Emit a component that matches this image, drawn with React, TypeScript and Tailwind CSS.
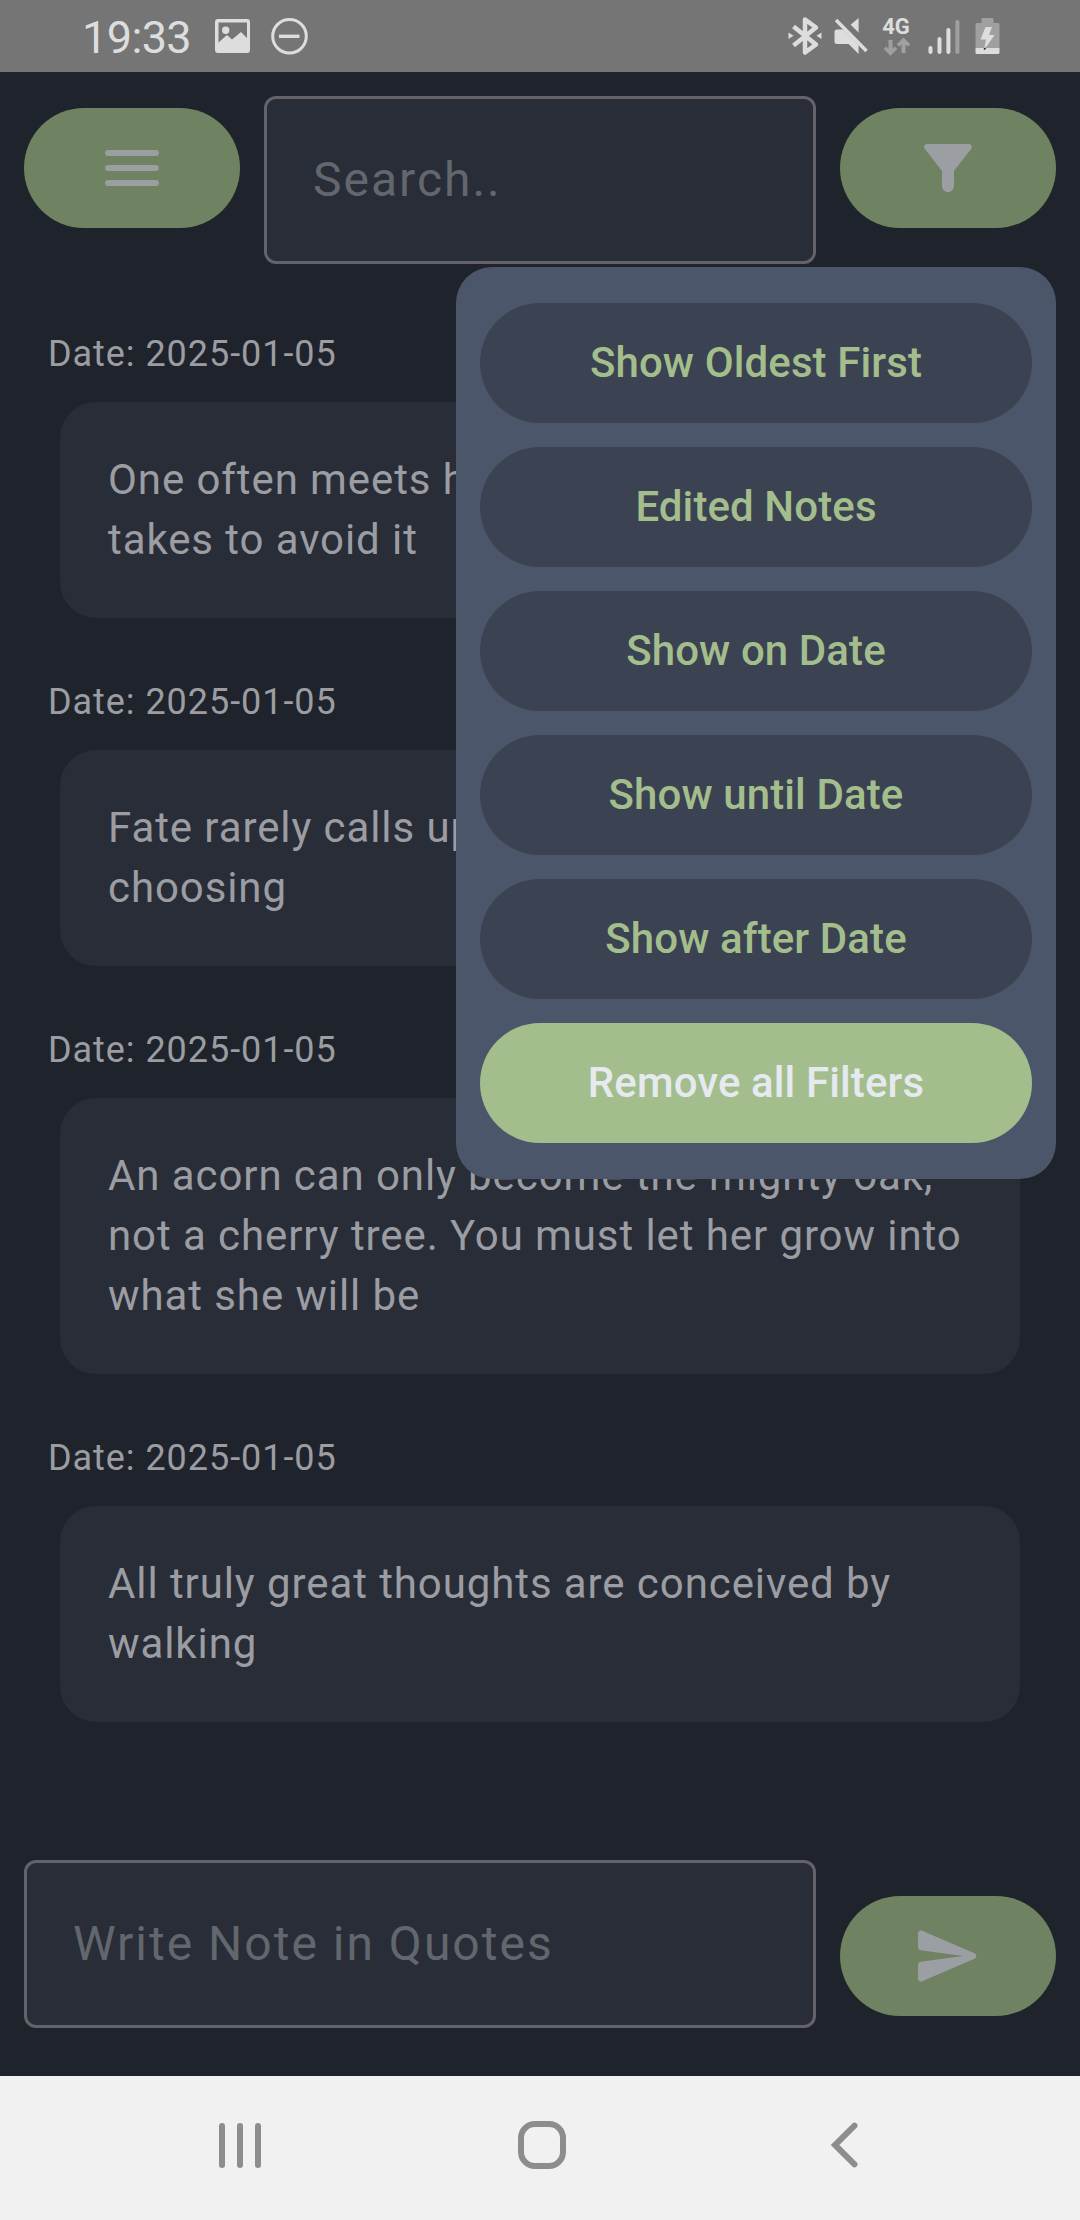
import React from "react";

const notes: { date: string; lines: string[] }[] = [
  { date: "2025-01-05", lines: ["One often meets his destiny on the road he", "takes to avoid it"] },
  { date: "2025-01-05", lines: ["Fate rarely calls upon us at a moment of our", "choosing"] },
  {
    date: "2025-01-05",
    lines: ["An acorn can only become the mighty oak,", "not a cherry tree. You must let her grow into", "what she will be"],
  },
  { date: "2025-01-05", lines: ["All truly great thoughts are conceived by", "walking"] },
];

const filters = ["Show Oldest First", "Edited Notes", "Show on Date", "Show until Date", "Show after Date"];

function StatusBar() {
  return (
    <header className="flex h-[72px] shrink-0 items-center justify-between bg-[#757575] pr-[80px] pl-[82px] text-[#dddddd]">
      <div className="flex items-center">
        <span className="w-[133px] pt-[3px] text-[45px] leading-[69px] tracking-[-0.6px] whitespace-nowrap">19:33</span>
        <svg width="36" height="36" viewBox="0 0 36 36" className="mr-[20px]">
          <path
            fill="currentColor"
            fillRule="evenodd"
            d="M3 1h29a3 3 0 0 1 3 3v28a3 3 0 0 1-3 3H3a3 3 0 0 1-3-3V4a3 3 0 0 1 3-3zM3.500 4.500v20l8.500-7.500 5 4.500L26 14l6 6V4.500zM10.700 8.500a3.700 3.700 0 1 1 0 7.400a3.700 3.700 0 0 1 0-7.400z"
          />
        </svg>
        <svg width="38" height="38" viewBox="0 0 38 38" fill="none" stroke="currentColor" strokeWidth="3">
          <circle cx="18.500" cy="19.300" r="16.800" />
          <path d="M8 19.300h20.500" strokeWidth="3.400" />
        </svg>
      </div>
      <div className="flex h-[40px] items-center">
        <svg width="34" height="40" viewBox="0 0 34 40" className="mr-[12px]">
          <path d="M5.500 10.500L28 28.500L17 36.500V3.500L28 11.500L5.500 29.500" fill="none" stroke="currentColor" strokeWidth="4.500" strokeLinejoin="round" />
          <path d="M0.500 16.500v6.600l5-3.300zM33.500 16.500v6.600l-5-3.300z" fill="currentColor" />
        </svg>
        <svg width="34" height="40" viewBox="0 0 34 40" className="mr-[14px]">
          <path d="M0.500 16q0-2.500 2.500-2.500h6l15.600 15.600V38l-10-10H3q-2.500 0-2.500-2.500zM24.600 2v14.500l-8-7.800z" fill="currentColor" />
          <path d="M2 4l30.500 31" stroke="currentColor" strokeWidth="3.500" />
        </svg>
        <div className="mr-[18px] flex h-[40px] w-[28px] flex-col items-center">
          <span className="h-[20px] text-[22px] leading-[22px] font-bold">4G</span>
          <svg width="28" height="20" viewBox="0 0 28 20" fill="none" stroke="#a0a0a0" strokeWidth="4">
            <path d="M8.500 4v13M21.500 17V5" />
            <path d="M3 11.800l5.500 5.400L14 11.800M16 9.500L21.500 4L27 9.500" strokeWidth="3.600" />
          </svg>
        </div>
        <svg width="32" height="40" viewBox="0 0 32 40" className="mr-[15px]" fill="currentColor">
          <rect x="0.500" y="30" width="4" height="8" rx="2" />
          <rect x="9.500" y="21" width="4" height="17" rx="2" />
          <rect x="18.400" y="12" width="4" height="26" rx="2" />
          <rect x="27.400" y="4" width="4" height="34" rx="2" fill="#a0a0a0" />
        </svg>
        <svg width="25" height="40" viewBox="0 0 25 40">
          <path d="M7.500 2h10q1 0 1 1v4H23q1.500 0 1.500 1.500V32H0.500V8.500Q0.500 7 2 7h4.500V3q0-1 1-1z" fill="#a0a0a0" />
          <path d="M0.500 32h24v4.500q0 1.500-1.500 1.500H2Q0.500 38 0.500 36.500z" fill="currentColor" />
          <path d="M10.500 11H17l-3 8h5.500L9 34l2-10.500H5.500z" fill="currentColor" />
          <path d="M8.800 33.500l2-1.500" stroke="#222" strokeWidth="1.400" />
        </svg>
      </div>
    </header>
  );
}

function PillButton({ children }: { children: React.ReactNode }) {
  return (
    <button className="flex h-[120px] w-[216px] shrink-0 items-center justify-center rounded-full bg-[#6f8261] text-[#9b9ea3]">
      <svg width="72" height="72" viewBox="0 0 24 24" fill="currentColor">
        {children}
      </svg>
    </button>
  );
}

function Field({ label }: { label: string }) {
  return (
    <div className="flex h-[168px] flex-1 items-center rounded-[12px] border-[3px] border-[#656269] bg-[#292d38] pl-[46px] text-[48px] leading-[72px] tracking-[2px] whitespace-nowrap text-[#62676e]">
      {label}
    </div>
  );
}

function FilterMenu() {
  return (
    <div className="absolute top-[267px] left-[456px] flex w-[600px] flex-col gap-[24px] rounded-[36px] bg-[#4c566a] px-[24px] py-[36px] text-[42px] font-medium tracking-[0.1px]">
      {filters.map((f) => (
        <button key={f} className="h-[120px] rounded-full bg-[#3b4252] leading-[60px] whitespace-nowrap text-[#a3be8c]">
          {f}
        </button>
      ))}
      <button className="h-[120px] rounded-full bg-[#a3be8c] leading-[60px] whitespace-nowrap text-[#e5e9f0]">Remove all Filters</button>
    </div>
  );
}

function NavBar() {
  return (
    <nav className="flex h-[144px] shrink-0 items-center bg-[#f1f1f1] pb-[6px] pl-[89px] text-[#8d8d8d]">
      <div className="flex w-[302px] justify-center gap-[12px]">
        <span className="h-[45px] w-[6px] rounded-full bg-current" />
        <span className="h-[45px] w-[6px] rounded-full bg-current" />
        <span className="h-[45px] w-[6px] rounded-full bg-current" />
      </div>
      <div className="flex w-[302px] justify-center">
        <span className="h-[48px] w-[48px] rounded-[17px] border-[6px] border-current" />
      </div>
      <div className="flex w-[302px] justify-center">
        <svg width="28" height="48" viewBox="0 0 28 48" fill="none" stroke="currentColor" strokeWidth="6" strokeLinecap="round">
          <path d="M24.500 4.700L5 24l19.500 19.300" />
        </svg>
      </div>
    </nav>
  );
}

export default function App() {
  return (
    <div className="relative flex h-[2220px] w-[1080px] flex-col overflow-hidden bg-[#1f232b] font-['Roboto',sans-serif]">
      <StatusBar />
      <div className="flex items-start gap-[24px] px-[24px] pt-[24px]">
        <div className="pt-[12px]">
          <PillButton>
            <path d="M4 18h16c.55 0 1-.45 1-1s-.45-1-1-1H4c-.55 0-1 .45-1 1s.45 1 1 1zm0-5h16c.55 0 1-.45 1-1s-.45-1-1-1H4c-.55 0-1 .45-1 1s.45 1 1 1zM3 7c0 .55.45 1 1 1h16c.55 0 1-.45 1-1s-.45-1-1-1H4c-.55 0-1 .45-1 1z" />
          </PillButton>
        </div>
        <Field label="Search.." />
        <div className="pt-[12px]">
          <PillButton>
            <path d="M4.250 5.610C6.570 8.590 10 13 10 13v5c0 1.100.9 2 2 2s2-.9 2-2v-5s3.430-4.410 5.750-7.390C20.260 4.950 19.790 4 18.950 4H5.040C4.210 4 3.740 4.950 4.250 5.610z" />
          </PillButton>
        </div>
      </div>
      <main className="flex flex-1 flex-col gap-[60px] pt-[66px] text-[#9b9da2]">
        {notes.map((n, i) => (
          <section key={i}>
            <p className="pl-[48px] text-[36px] leading-[48px] tracking-[0.95px]">Date: {n.date}</p>
            <div className="mx-[60px] mt-[24px] rounded-[36px] bg-[#292d38] p-[48px] text-[42px] leading-[60px] tracking-[0.91px]">
              {n.lines.map((line) => (
                <p key={line} className="whitespace-nowrap">
                  {line}
                </p>
              ))}
            </div>
          </section>
        ))}
      </main>
      <div className="flex items-end gap-[24px] px-[24px] pb-[48px]">
        <Field label="Write Note in Quotes" />
        <div className="pb-[12px]">
          <PillButton>
            <path d="M3.400 20.400l17.450-7.480c.81-.35.81-1.490 0-1.840L3.400 3.600c-.66-.29-1.390.2-1.390.91L2 9.120c0 .5.370.93.870.99L17 12 2.870 13.880c-.5.070-.87.5-.87 1l.010 4.610c0 .71.730 1.200 1.390.91z" />
          </PillButton>
        </div>
      </div>
      <NavBar />
      <FilterMenu />
    </div>
  );
}
